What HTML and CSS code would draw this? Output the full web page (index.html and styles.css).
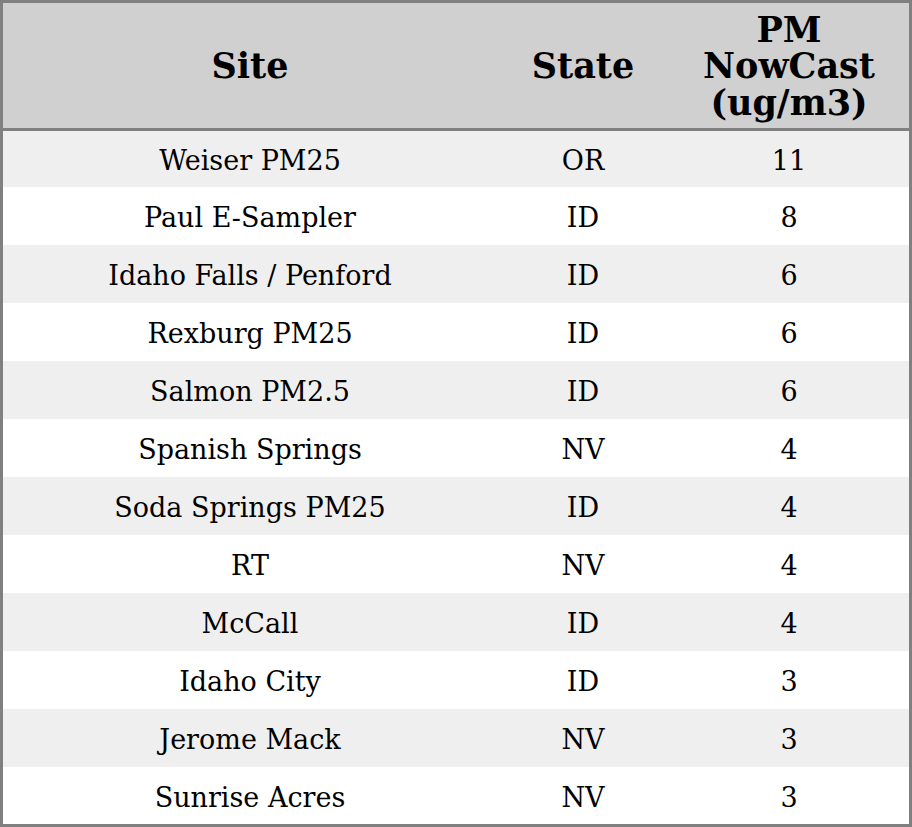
FILE: index.html
```html
<!DOCTYPE html>
<html>
<head>
<meta charset="utf-8">
<link rel="stylesheet" href="styles.css">
</head>
<body>
<table class="aq">
  <thead>
    <tr><th class="c-site">Site</th><th class="c-state">State</th><th class="c-pm"><span class="wrap">PM NowCast (ug/m3)</span></th></tr>
  </thead>
  <tbody>
    <tr><td>Weiser PM25</td><td>OR</td><td>11</td></tr>
    <tr><td>Paul E-Sampler</td><td>ID</td><td>8</td></tr>
    <tr><td>Idaho Falls / Penford</td><td>ID</td><td>6</td></tr>
    <tr><td>Rexburg PM25</td><td>ID</td><td>6</td></tr>
    <tr><td>Salmon PM2.5</td><td>ID</td><td>6</td></tr>
    <tr><td>Spanish Springs</td><td>NV</td><td>4</td></tr>
    <tr><td>Soda Springs PM25</td><td>ID</td><td>4</td></tr>
    <tr><td>RT</td><td>NV</td><td>4</td></tr>
    <tr><td>McCall</td><td>ID</td><td>4</td></tr>
    <tr><td>Idaho City</td><td>ID</td><td>3</td></tr>
    <tr><td>Jerome Mack</td><td>NV</td><td>3</td></tr>
    <tr><td>Sunrise Acres</td><td>NV</td><td>3</td></tr>
  </tbody>
</table>
</body>
</html>
```
FILE: styles.css
```css
html, body { margin: 0; padding: 0; background: #fff; }
.aq {
  width: 912px;
  border-collapse: separate;
  border-spacing: 0;
  border: 3px solid #808080;
  font-family: "DejaVu Serif", serif;
  color: #000;
  table-layout: fixed;
}
.aq thead tr { height: 128px; }
.aq th {
  background: #d0d0d0;
  font-weight: bold;
  font-size: 35px;
  line-height: 36.5px;
  padding: 2px 0 0 0;
  border-bottom: 3px solid #808080;
  text-align: center;
  vertical-align: middle;
}
.c-site { width: 494px; }
.c-state { width: 172px; }
.c-pm { width: 240px; }
.wrap { display: inline-block; max-width: 190px; }
.aq tbody tr { height: 58px; }
.aq tbody tr:first-child { height: 56px; }
.aq tbody tr:last-child { height: 57px; }
.aq td {
  font-size: 27px;
  padding: 3px 0 0 0;
  text-align: center;
  vertical-align: middle;
}
.aq tbody tr:nth-child(odd) td { background: #efefef; }
```
